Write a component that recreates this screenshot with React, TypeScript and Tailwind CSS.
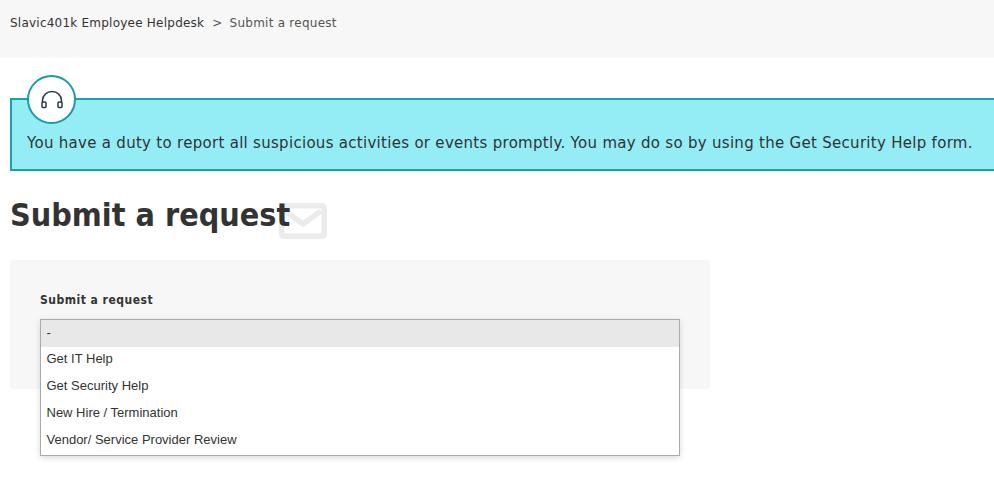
const sans = 'font-["DejaVu_Sans",sans-serif]';

const options = ['-', 'Get IT Help', 'Get Security Help', 'New Hire / Termination', 'Vendor/ Service Provider Review'];

function HeadsetIcon() {
    return (
        <svg width="24" height="24" viewBox="0 0 24 24" fill="none" stroke="#2f3a45" strokeWidth="1.5">
            <path d="M2.5 17v-4.5a9.5 9 0 0 1 19 0V17" />
            <rect x="2" y="14" width="4" height="5.5" rx="1" fill="#fff" />
            <rect x="18" y="14" width="4" height="5.5" rx="1" fill="#fff" />
        </svg>
    );
}

function EnvelopeIcon() {
    return (
        <svg width="48" height="36" viewBox="0 0 48 36" fill="none" stroke="#ebebeb" strokeWidth="5.5" strokeLinejoin="round">
            <rect x="2.75" y="2.75" width="42.5" height="30.5" rx="2" />
            <path d="M6 8l18 13L42 8" />
        </svg>
    );
}

export default function App() {
    return (
        <div className={`h-[501px] w-[994px] overflow-hidden bg-white ${sans}`}>
            <nav className="flex h-[58px] items-start bg-[#f7f7f7] pl-[10px] pt-[15px] text-[12px] leading-[16px] tracking-[0.23px] text-[#555]">
                <span className="text-[#333]">Slavic401k Employee Helpdesk</span>
                <span className="ml-[8px] mr-[7px]">&gt;</span>
                <span className="tracking-[0.25px]">Submit a request</span>
            </nav>

            <div className="relative ml-[10px] mt-[40px] h-[73px] w-[1000px] border-2 border-r-0 border-[#17a2b0] bg-[#94edf5] pl-[15px] pt-[32px]">
                <div className="absolute left-[15px] top-[-25px] flex h-[49px] w-[49px] items-center justify-center rounded-full border-2 border-[#1d9aa8] bg-white">
                    <HeadsetIcon />
                </div>
                <p className="whitespace-nowrap text-[15px] leading-[22px] tracking-[0.29px] text-[#333]">
                    You have a duty to report all suspicious activities or events promptly. You may do so by using the Get Security Help form.
                </p>
            </div>

            <div className="relative ml-[10px] mt-[23px] h-[43px] w-fit">
                <h1 className="relative z-10 font-['DejaVu_Sans_Condensed','DejaVu_Sans',sans-serif] text-[32px] font-bold leading-[43px] tracking-[0px] text-[#333]">Submit a request</h1>
                <div className="absolute left-[269px] top-[9px]">
                    <EnvelopeIcon />
                </div>
            </div>

            <div className="relative ml-[10px] mt-[23px] h-[129px] w-[700px] rounded-[3px] bg-[#f7f7f7] pl-[30px] pt-[32px]">
                <label className="block font-['DejaVu_Sans_Condensed','DejaVu_Sans',sans-serif] text-[12px] font-bold leading-[16px] tracking-[0.5px] text-[#333]">Submit a request</label>
                <ul className="absolute left-[30px] top-[59px] w-[640px] border border-[#aaa] bg-white font-['Liberation_Sans',sans-serif] text-[13px] leading-[24px] text-[#333] shadow-[0_2px_6px_rgba(0,0,0,0.15)]">
                    {options.map((option, index) => (
                        <li key={option} className={index === 0 ? 'bg-[#e8e8e8] px-[5.5px] pb-[2px] pt-[1px]' : 'px-[5.5px] pb-[3px]'}>{option}</li>
                    ))}
                </ul>
            </div>
        </div>
    );
}
